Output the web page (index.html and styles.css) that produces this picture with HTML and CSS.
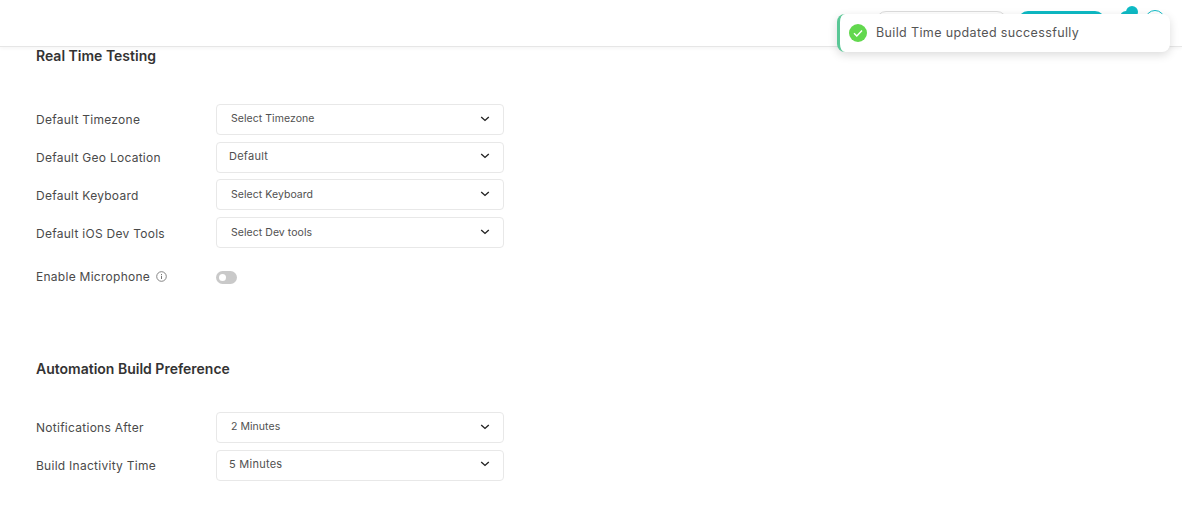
FILE: index.html
```html
<!DOCTYPE html>
<html lang="en">
<head>
  <meta charset="UTF-8" />
  <title>Settings - Preferences</title>
  <link rel="stylesheet" href="styles.css">
</head>
<body>

  <header class="topbar">
    <div class="top-actions">
      <span class="top-btn-outline"></span>
      <span class="top-btn-solid"></span>
      <span class="top-bell"><span class="top-bell-dot"></span></span>
      <span class="top-avatar"></span>
    </div>
  </header>

  <div class="toast">
    <svg class="toast-icon" width="18" height="18" viewBox="0 0 18 18">
      <circle cx="9" cy="9" r="9" fill="#62d84e"/>
      <path d="M5 9.3l2.8 2.7L13 6.6" fill="none" stroke="#fff" stroke-width="1.4"/>
    </svg>
    <span class="toast-text">Build Time updated successfully</span>
  </div>

  <main class="content">
    <section class="section">
      <h2>Real Time Testing</h2>
      <div class="rows">
        <div class="row">
          <label>Default Timezone</label>
          <div class="select"><span>Select Timezone</span><svg class="chev" width="10" height="6" viewBox="0 0 10 6"><path d="M1.2 1l3.8 3.4L8.8 1" fill="none" stroke="#222" stroke-width="1.4"/></svg></div>
        </div>
        <div class="row">
          <label>Default Geo Location</label>
          <div class="select tight"><span>Default</span><svg class="chev" width="10" height="6" viewBox="0 0 10 6"><path d="M1.2 1l3.8 3.4L8.8 1" fill="none" stroke="#222" stroke-width="1.4"/></svg></div>
        </div>
        <div class="row">
          <label>Default Keyboard</label>
          <div class="select"><span>Select Keyboard</span><svg class="chev" width="10" height="6" viewBox="0 0 10 6"><path d="M1.2 1l3.8 3.4L8.8 1" fill="none" stroke="#222" stroke-width="1.4"/></svg></div>
        </div>
        <div class="row">
          <label>Default iOS Dev Tools</label>
          <div class="select"><span>Select Dev tools</span><svg class="chev" width="10" height="6" viewBox="0 0 10 6"><path d="M1.2 1l3.8 3.4L8.8 1" fill="none" stroke="#222" stroke-width="1.4"/></svg></div>
        </div>
      </div>
      <div class="row toggle-row">
        <label>Enable Microphone
          <svg class="info" width="11" height="11" viewBox="0 0 11 11">
            <circle cx="5.5" cy="5.5" r="4.8" fill="none" stroke="#777" stroke-width="0.9"/>
            <path d="M5.5 4.8v3.2M5.5 3v1" stroke="#777" stroke-width="1"/>
          </svg>
        </label>
        <span class="toggle"><span class="knob"></span></span>
      </div>
    </section>

    <section class="section second">
      <h2>Automation Build Preference</h2>
      <div class="rows">
        <div class="row">
          <label>Notifications After</label>
          <div class="select"><span>2 Minutes</span><svg class="chev" width="10" height="6" viewBox="0 0 10 6"><path d="M1.2 1l3.8 3.4L8.8 1" fill="none" stroke="#222" stroke-width="1.4"/></svg></div>
        </div>
        <div class="row">
          <label>Build Inactivity Time</label>
          <div class="select tight"><span>5 Minutes</span><svg class="chev" width="10" height="6" viewBox="0 0 10 6"><path d="M1.2 1l3.8 3.4L8.8 1" fill="none" stroke="#222" stroke-width="1.4"/></svg></div>
        </div>
      </div>
    </section>
  </main>

</body>
</html>
```

FILE: styles.css
```css
* {
  box-sizing: border-box;
}
html, body {
  height: 100%;
}
body {
  font-family: Inter, sans-serif;
  background-color: white;
  color: #333;
  margin: 0;
  overflow: hidden;
}
.topbar {
  height: 47px;
  background-color: white;
  border-bottom: 1px solid #e6e6e6;
  box-shadow: 0 1px 4px rgba(0, 0, 0, 0.05);
  overflow: hidden;
}
.top-actions {
  display: flex;
  justify-content: flex-end;
  align-items: flex-start;
  padding: 11px 17px 0 0;
}
.top-btn-outline {
  width: 131px;
  height: 30px;
  border: 1px solid #ddd;
  border-radius: 10px;
  margin-right: 11px;
}
.top-btn-solid {
  width: 87px;
  height: 30px;
  background-color: #0ebac5;
  border-radius: 10px;
  margin-right: 15px;
}
.top-bell {
  position: relative;
  width: 12px;
  height: 20px;
  background-color: #0ebac5;
  border-radius: 6px;
  margin-right: 13px;
}
.top-bell-dot {
  position: absolute;
  top: -5px;
  left: 6px;
  width: 12px;
  height: 12px;
  border-radius: 50%;
  background-color: #0ebac5;
}
.top-avatar {
  width: 20px;
  height: 20px;
  margin-top: -1px;
  border: 1px solid #0ebac5;
  border-radius: 50%;
}
.toast {
  position: absolute;
  top: 14px;
  left: 837px;
  width: 333px;
  height: 38px;
  display: flex;
  align-items: center;
  gap: 9px;
  padding-left: 9px;
  background-color: white;
  border-left: 3px solid #5ac796;
  border-radius: 8px;
  box-shadow: 0 3px 10px rgba(0, 0, 0, 0.14);
  font-size: 12.5px;
  letter-spacing: 0.37px;
  color: #555;
}
.toast-icon {
  flex-shrink: 0;
}
.toast-text {
  margin-bottom: 1px;
}
.content {
  padding-left: 36px;
}
h2 {
  margin: 0;
  font-size: 14px;
  line-height: 18px;
  font-weight: 600;
  color: #333;
}
.section h2 {
  margin-bottom: 38.8px;
}
.section.second {
  margin-top: 76px;
}
.section.second h2 {
  margin-bottom: 33.7px;
}
.rows {
  display: flex;
  flex-direction: column;
  gap: 6.8px;
}
.row {
  display: flex;
  align-items: center;
}
.row label {
  width: 180px;
  padding-top: 1px;
  font-size: 12px;
  color: #4a4a4a;
  letter-spacing: 0.27px;
}
.select {
  width: 288px;
  height: 31px;
  display: flex;
  align-items: center;
  justify-content: space-between;
  padding: 0 13px 1px 14px;
  border: 1px solid #e8e8e8;
  border-radius: 4px;
  font-size: 10.5px;
  letter-spacing: 0.05px;
  color: #505050;
}
.select.tight {
  padding-left: 12px;
  padding-bottom: 2px;
  font-size: 11px;
  letter-spacing: 0.25px;
}
.toggle-row {
  margin-top: 19px;
}
.info {
  margin-left: 2px;
  vertical-align: -1px;
}
.toggle {
  position: relative;
  width: 21px;
  height: 13px;
  margin-top: 4px;
  border-radius: 7px;
  background-color: #c9c9c9;
}
.knob {
  position: absolute;
  top: 3px;
  left: 3px;
  width: 7px;
  height: 7px;
  border-radius: 50%;
  background-color: white;
}
```
